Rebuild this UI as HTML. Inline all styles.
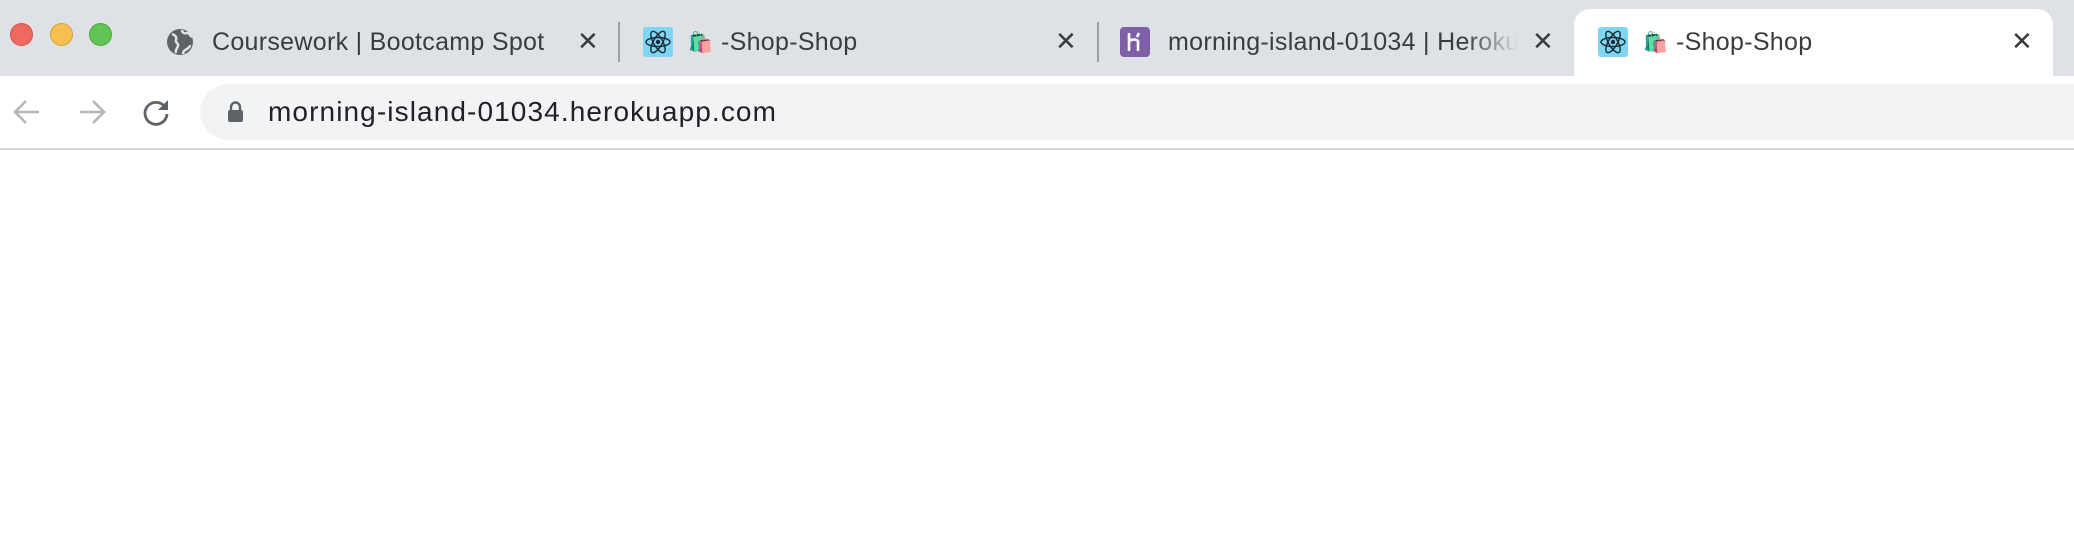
<!DOCTYPE html>
<html><head><meta charset="utf-8"><style>
*{margin:0;padding:0;box-sizing:border-box}
body{width:2074px;height:538px;background:#fff;position:relative;overflow:hidden;font-family:"Liberation Sans",sans-serif;color:#3c4043}
.bar{position:absolute;left:0;top:0;width:2074px;height:76px;background:#dee1e6}
.tl{position:absolute;top:23px;width:23px;height:23px;border-radius:50%}
.t{position:absolute;font-size:25px;top:28px;white-space:nowrap;color:#3c3c3c;letter-spacing:0.3px}
.x{position:absolute;top:26px;font-size:26px;color:#3c3c3c}
.sep{position:absolute;top:22px;width:2px;height:40px;background:#9aa0a6}
.active{position:absolute;left:1574px;top:9px;width:479px;height:80px;background:#fff;border-radius:16px 16px 0 0}
.tb{position:absolute;left:0;top:76px;width:2074px;height:72px;background:#fff}
.omni{position:absolute;left:200px;top:84px;width:1900px;height:56px;background:#f1f3f4;border-radius:28px}
.line{position:absolute;left:0;top:148px;width:2074px;height:2px;background:#d8d8d8}
.url{position:absolute;left:268px;top:96px;font-size:28px;color:#202124;letter-spacing:1.1px}
.react{position:absolute;width:30px;height:30px;background:#7fd6f3;border-radius:3px}
</style></head><body>
<div class="bar"></div>
<div class="tl" style="left:10px;background:#ee6a5f;border:1px solid #d9534c"></div>
<div class="tl" style="left:50px;background:#f5c04f;border:1px solid #d8a13c"></div>
<div class="tl" style="left:89px;background:#61c554;border:1px solid #4da83f"></div>

<svg style="position:absolute;left:166px;top:28px" width="28" height="28" viewBox="0 0 28 28"><circle cx="14" cy="14" r="13" fill="#5f6368"/><path d="M6 6c3 1 5 3 4 6s3 3 2 6-3 4-2 7M16 2c0 3 3 4 5 3s3 3 5 4M17 26c0-3 2-4 4-5s2-3 4-3" stroke="#dee1e6" stroke-width="2.5" fill="none"/></svg>
<div class="t" style="left:212px">Coursework | Bootcamp Spot</div>
<div class="x" style="left:577px">✕</div>
<div class="sep" style="left:618px"></div>

<div class="react" style="left:643px;top:27px"></div>
<svg style="position:absolute;left:643px;top:27px" width="30" height="30" viewBox="0 0 30 30"><g fill="none" stroke="#1b2a36" stroke-width="1.4"><ellipse cx="15" cy="15" rx="12" ry="4.5"/><ellipse cx="15" cy="15" rx="12" ry="4.5" transform="rotate(60 15 15)"/><ellipse cx="15" cy="15" rx="12" ry="4.5" transform="rotate(120 15 15)"/></g><circle cx="15" cy="15" r="2.2" fill="#1b2a36"/></svg>
<div class="t" style="left:688px;font-size:20px;top:30px">🛍️</div>
<div class="t" style="left:721px">-Shop-Shop</div>
<div class="x" style="left:1055px">✕</div>
<div class="sep" style="left:1097px"></div>

<div style="position:absolute;left:1120px;top:27px;width:30px;height:30px;background:#7e5fa8;border-radius:4px"></div>
<svg style="position:absolute;left:1120px;top:27px" width="30" height="30" viewBox="0 0 30 30"><path d="M9 6v18M9 14c3-2 7-2 9 0v10M19 6l-2 4" stroke="#fff" stroke-width="2.6" fill="none"/></svg>
<div class="t" style="left:1168px;width:350px;overflow:hidden;-webkit-mask-image:linear-gradient(to right,#000 85%,transparent)">morning-island-01034 | Heroku</div>
<div class="x" style="left:1532px">✕</div>

<div class="active"></div>
<div style="position:absolute;left:1558px;top:73px;width:16px;height:16px;background:radial-gradient(circle at 0 0,#dee1e6 16px,#fff 16.5px)"></div>
<div style="position:absolute;left:2053px;top:73px;width:16px;height:16px;background:radial-gradient(circle at 100% 0,#dee1e6 16px,#fff 16.5px)"></div>
<div class="react" style="left:1598px;top:27px"></div>
<svg style="position:absolute;left:1598px;top:27px" width="30" height="30" viewBox="0 0 30 30"><g fill="none" stroke="#1b2a36" stroke-width="1.4"><ellipse cx="15" cy="15" rx="12" ry="4.5"/><ellipse cx="15" cy="15" rx="12" ry="4.5" transform="rotate(60 15 15)"/><ellipse cx="15" cy="15" rx="12" ry="4.5" transform="rotate(120 15 15)"/></g><circle cx="15" cy="15" r="2.2" fill="#1b2a36"/></svg>
<div class="t" style="left:1643px;font-size:20px;top:30px">🛍️</div>
<div class="t" style="left:1676px">-Shop-Shop</div>
<div class="x" style="left:2011px">✕</div>

<div class="tb"></div>
<svg style="position:absolute;left:12px;top:98px" width="30" height="28" viewBox="0 0 30 28"><path d="M27 14H4M14 3L3 14l11 11" stroke="#b4b6b9" stroke-width="2.6" fill="none"/></svg>
<svg style="position:absolute;left:77px;top:98px" width="30" height="28" viewBox="0 0 30 28"><path d="M3 14h23M16 3l11 11-11 11" stroke="#b4b6b9" stroke-width="2.6" fill="none"/></svg>
<svg style="position:absolute;left:141px;top:97px" width="30" height="30" viewBox="0 0 30 30"><path d="M24 10A11 11 0 1 0 26 17" stroke="#5f6368" stroke-width="2.8" fill="none"/><path d="M27 3v10H17z" fill="#5f6368"/></svg>
<div class="omni"></div>
<svg style="position:absolute;left:227px;top:101px" width="17" height="22" viewBox="0 0 17 22"><path d="M4 10V6a4.5 4.5 0 0 1 9 0v4" stroke="#5f6368" stroke-width="2.4" fill="none"/><rect x="1" y="9" width="15" height="12" rx="2" fill="#5f6368"/></svg>
<div class="url">morning-island-01034.herokuapp.com</div>
<div class="line"></div>
</body></html>
